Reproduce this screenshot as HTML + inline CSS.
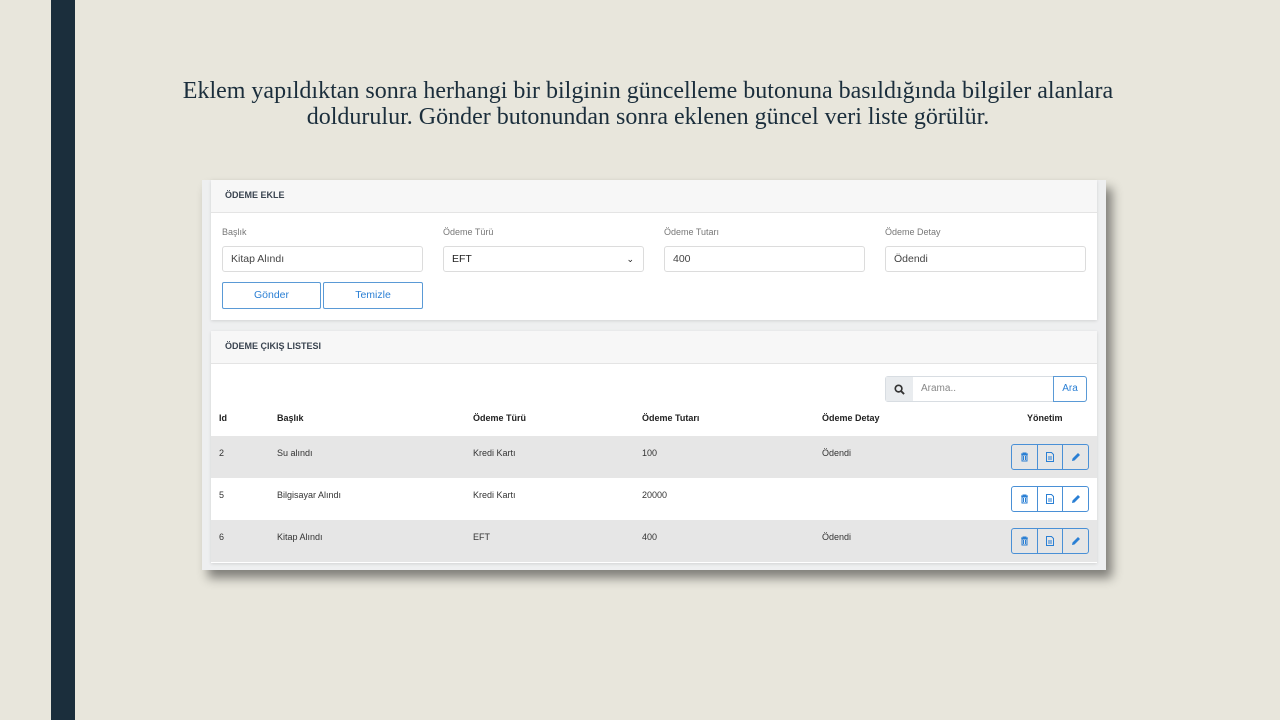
<!DOCTYPE html>
<html><head><meta charset="utf-8"><style>
*{box-sizing:border-box;margin:0;padding:0}
body{width:1280px;height:720px;background:#e8e6dc;position:relative;overflow:hidden;font-family:"Liberation Sans",sans-serif}
.bar{position:absolute;left:51px;top:0;width:24px;height:720px;background:#1b2e3c}
.title{position:absolute;left:173px;width:950px;top:78px;text-align:center;font-family:"Liberation Serif",serif;font-size:24px;line-height:26px;color:#1b2e3c}
.shot{position:absolute;left:202px;top:180px;width:904px;height:390px;background:#eeeff0;box-shadow:6px 8px 10px rgba(0,0,0,.45)}
.card{position:absolute;left:9px;width:886px;background:#fff;box-shadow:0 1px 3px rgba(0,0,0,.12)}
.hd{height:33px;background:#f7f7f7;border-bottom:1px solid #e4e4e4;font-size:9px;font-weight:bold;color:#3a4450;padding-left:14px;line-height:30px}
.lbl{position:absolute;font-size:9px;color:#777}
.inp{position:absolute;height:26px;border:1px solid #dcdcdc;border-radius:3px;font-size:10.5px;color:#444;padding-left:8px;line-height:24px;width:201px}
.btn{position:absolute;height:27px;border:1px solid #5a9ad6;border-radius:2px;color:#2a7fd4;font-size:10.5px;text-align:center;line-height:25px;width:99px}
.th{position:absolute;font-size:9px;font-weight:bold;color:#222;top:82px}
.row{position:absolute;left:0;width:886px;height:42px;font-size:9px;color:#333}
.row span{position:absolute;top:12px}
.g{background:#e6e6e6}
.ic{position:absolute;right:8px;top:8px;width:78px;height:26px;border:1px solid #4a90d6;border-radius:3px;display:flex}
.ic div{flex:1;border-left:1px solid #4a90d6;display:flex;align-items:center;justify-content:center}
.ic div:first-child{border-left:none}
</style></head><body>
<div class="bar"></div>
<div class="title">Eklem yapıldıktan sonra herhangi bir bilginin güncelleme butonuna basıldığında bilgiler alanlara doldurulur. Gönder butonundan sonra eklenen güncel veri liste görülür.</div>
<div class="shot">
 <div class="card" style="top:0;height:140px">
  <div class="hd">ÖDEME EKLE</div>
  <div class="lbl" style="left:11px;top:47px">Başlık</div>
  <div class="lbl" style="left:232px;top:47px">Ödeme Türü</div>
  <div class="lbl" style="left:453px;top:47px">Ödeme Tutarı</div>
  <div class="lbl" style="left:674px;top:47px">Ödeme Detay</div>
  <div class="inp" style="left:11px;top:66px">Kitap Alındı</div>
  <div class="inp" style="left:232px;top:66px;color:#222">EFT<span style="position:absolute;right:9px;top:0;font-size:9px">&#8964;</span></div>
  <div class="inp" style="left:453px;top:66px">400</div>
  <div class="inp" style="left:674px;top:66px">Ödendi</div>
  <div class="btn" style="left:11px;top:102px">Gönder</div>
  <div class="btn" style="left:112px;top:102px;width:100px">Temizle</div>
 </div>
 <div class="card" style="top:151px;height:232px">
  <div class="hd">ÖDEME ÇIKIŞ LISTESI</div>
  <div style="position:absolute;left:674px;top:45px;width:202px;height:26px;border:1px solid #d8dde2;border-radius:3px;display:flex">
   <div style="width:27px;background:#e9ecef;display:flex;align-items:center;justify-content:center"><svg width="11" height="11" viewBox="0 0 12 12"><circle cx="5" cy="5" r="3.6" fill="none" stroke="#333" stroke-width="1.8"/><path d="M7.7 7.7L11 11" stroke="#333" stroke-width="2"/></svg></div>
   <div style="flex:1;font-size:10px;color:#888;padding-left:8px;line-height:24px">Arama..</div>
   <div style="width:34px;border:1px solid #5a9ad6;border-radius:0 3px 3px 0;margin:-1px;color:#2a7fd4;font-size:10px;text-align:center;line-height:24px">Ara</div>
  </div>
  <div class="th" style="left:8px">Id</div>
  <div class="th" style="left:66px">Başlık</div>
  <div class="th" style="left:262px">Ödeme Türü</div>
  <div class="th" style="left:431px">Ödeme Tutarı</div>
  <div class="th" style="left:611px">Ödeme Detay</div>
  <div class="th" style="left:816px">Yönetim</div>
  <div class="row g" style="top:105px"><span style="left:8px">2</span><span style="left:66px">Su alındı</span><span style="left:262px">Kredi Kartı</span><span style="left:431px">100</span><span style="left:611px">Ödendi</span>
   <div class="ic"><div><svg width="9" height="10" viewBox="0 0 9 10"><path d="M1 2h7M3 2V1h3v1M2 3h5v6H2z M3.5 4v4M5.5 4v4" fill="none" stroke="#2a7fd4" stroke-width="1"/></svg></div><div><svg width="8" height="10" viewBox="0 0 8 10"><path d="M.5.5h5l2 2v7h-7z M2 5h4M2 7h4" fill="none" stroke="#2a7fd4" stroke-width="1"/></svg></div><div><svg width="10" height="10" viewBox="0 0 10 10"><path d="M1 9l.5-2.5L7 1l2 2-5.5 5.5z" fill="#2a7fd4"/></svg></div></div></div>
  <div class="row" style="top:147px"><span style="left:8px">5</span><span style="left:66px">Bilgisayar Alındı</span><span style="left:262px">Kredi Kartı</span><span style="left:431px">20000</span>
   <div class="ic"><div><svg width="9" height="10" viewBox="0 0 9 10"><path d="M1 2h7M3 2V1h3v1M2 3h5v6H2z M3.5 4v4M5.5 4v4" fill="none" stroke="#2a7fd4" stroke-width="1"/></svg></div><div><svg width="8" height="10" viewBox="0 0 8 10"><path d="M.5.5h5l2 2v7h-7z M2 5h4M2 7h4" fill="none" stroke="#2a7fd4" stroke-width="1"/></svg></div><div><svg width="10" height="10" viewBox="0 0 10 10"><path d="M1 9l.5-2.5L7 1l2 2-5.5 5.5z" fill="#2a7fd4"/></svg></div></div></div>
  <div class="row g" style="top:189px"><span style="left:8px">6</span><span style="left:66px">Kitap Alındı</span><span style="left:262px">EFT</span><span style="left:431px">400</span><span style="left:611px">Ödendi</span>
   <div class="ic"><div><svg width="9" height="10" viewBox="0 0 9 10"><path d="M1 2h7M3 2V1h3v1M2 3h5v6H2z M3.5 4v4M5.5 4v4" fill="none" stroke="#2a7fd4" stroke-width="1"/></svg></div><div><svg width="8" height="10" viewBox="0 0 8 10"><path d="M.5.5h5l2 2v7h-7z M2 5h4M2 7h4" fill="none" stroke="#2a7fd4" stroke-width="1"/></svg></div><div><svg width="10" height="10" viewBox="0 0 10 10"><path d="M1 9l.5-2.5L7 1l2 2-5.5 5.5z" fill="#2a7fd4"/></svg></div></div></div>
 </div>
</div>
</body></html>
